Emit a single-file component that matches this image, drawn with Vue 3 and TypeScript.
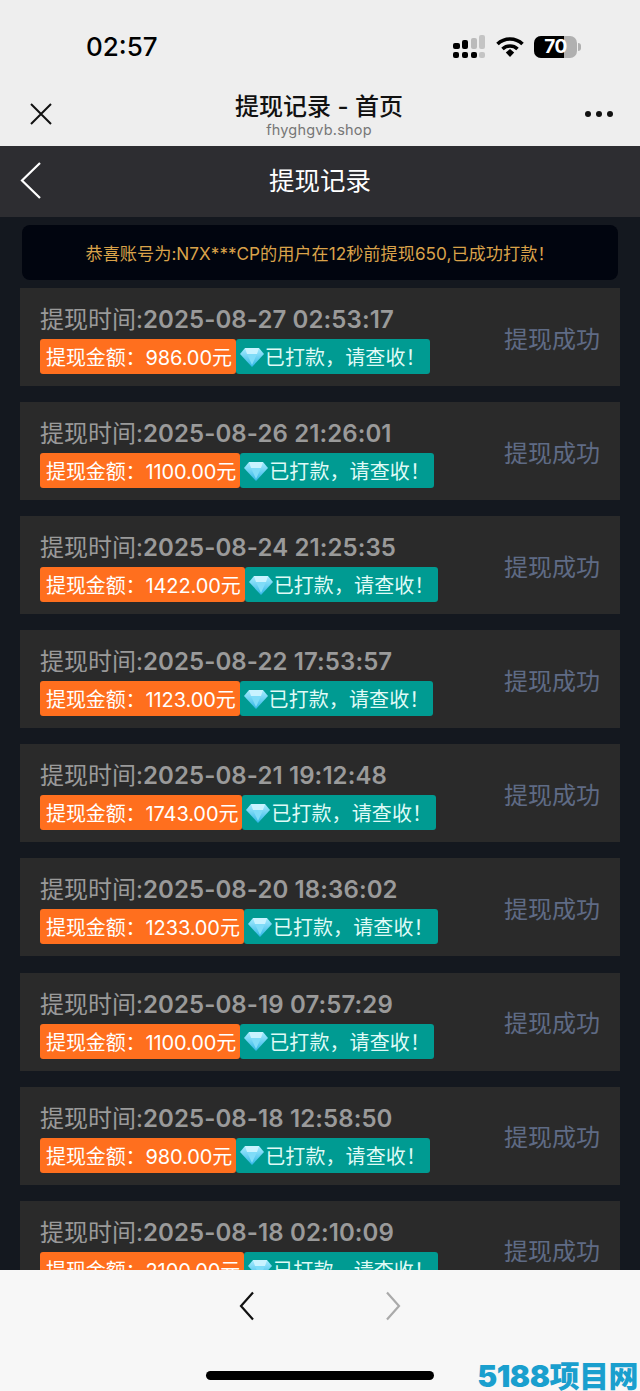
<script setup lang="ts">
const records = [
  { time: '2025-08-27 02:53:17', amount: '986.00' },
  { time: '2025-08-26 21:26:01', amount: '1100.00' },
  { time: '2025-08-24 21:25:35', amount: '1422.00' },
  { time: '2025-08-22 17:53:57', amount: '1123.00' },
  { time: '2025-08-21 19:12:48', amount: '1743.00' },
  { time: '2025-08-20 18:36:02', amount: '1233.00' },
  { time: '2025-08-19 07:57:29', amount: '1100.00' },
  { time: '2025-08-18 12:58:50', amount: '980.00' },
  { time: '2025-08-18 02:10:09', amount: '2100.00' }
]
</script>

<template>
  <div class="phone">
    <header class="browser-top">
      <div class="status">
        <span class="clock">02:57</span>
        <div class="status-icons">
          <svg class="signal" width="33" height="23" viewBox="0 0 33 23">
            <rect x="0" y="8" width="7" height="6" rx="2" fill="#000" />
            <rect x="9" y="5" width="6" height="9" rx="2" fill="#000" />
            <rect x="18" y="3" width="6" height="11" rx="2" fill="#bbb" />
            <rect x="26" y="0" width="6" height="14" rx="2" fill="#c4c4c4" />
            <rect x="0" y="17" width="6" height="6" rx="2" fill="#000" />
            <rect x="9" y="17" width="6" height="6" rx="2" fill="#000" />
            <rect x="18" y="17" width="6" height="6" rx="2" fill="#000" />
            <rect x="26" y="17" width="6" height="6" rx="2" fill="#c4c4c4" />
          </svg>
          <svg class="wifi" width="28" height="22" viewBox="0 0 28 22">
            <path d="M1.500 8a18 18 0 0 1 25 0" fill="none" stroke="#000" stroke-width="3.600" />
            <path d="M6.500 13a11 11 0 0 1 15 0" fill="none" stroke="#000" stroke-width="3.600" />
            <path d="M9.800 16.500L14 13l4.200 3.500L14 21z" fill="#000" />
          </svg>
          <div class="battery">
            <div class="battery-body">
              <span class="battery-fill"></span>
              <span class="battery-num">70</span>
            </div>
            <span class="battery-cap"></span>
          </div>
        </div>
      </div>
      <div class="title-row">
        <svg class="close" width="24" height="22" viewBox="0 0 24 22">
          <path d="M2 1l20 20M22 1L2 21" fill="none" stroke="#111" stroke-width="2" />
        </svg>
        <div class="title-block">
          <div class="page-title">提现记录 - 首页</div>
          <div class="page-url">fhyghgvb.shop</div>
        </div>
        <div class="more"><i></i><i></i><i></i></div>
      </div>
    </header>

    <nav class="navbar">
      <svg class="nav-back" width="22" height="37" viewBox="0 0 22 37">
        <path d="M20 1L2 18.500 20 36" fill="none" stroke="#fff" stroke-width="2.200" />
      </svg>
      <span class="nav-title">提现记录</span>
      <span class="nav-spacer"></span>
    </nav>

    <main class="content">
      <div class="notice">恭喜账号为:N7X***CP的用户在12秒前提现650,已成功打款！</div>
      <div v-for="item in records" :key="item.time" class="record">
        <div class="record-left">
          <div class="record-time">提现时间:<b>{{ item.time }}</b></div>
          <div class="tags">
            <span class="tag tag-amount">提现金额：{{ item.amount }}元</span>
            <span class="tag tag-paid">
              <svg width="26" height="24" viewBox="0 0 26 24">
                <defs>
                  <linearGradient id="gem" x1="0" y1="0" x2="0" y2="1">
                    <stop offset="0" stop-color="#a8ecff" />
                    <stop offset="1" stop-color="#2fb6e6" />
                  </linearGradient>
                </defs>
                <path d="M6 3h14l5 6-12 13L1 9z" fill="url(#gem)" />
                <path d="M8 9h10l-5 11z" fill="#7fdcf8" />
                <path d="M6 3l2 6h10l2-6z" fill="#c9f3ff" />
              </svg>已打款，请查收！
            </span>
          </div>
        </div>
        <span class="record-state">提现成功</span>
      </div>
    </main>

    <footer class="browser-bottom">
      <div class="arrows">
        <svg width="16" height="30" viewBox="0 0 16 30">
          <path d="M14 1.500L2 15l12 13.500" fill="none" stroke="#111" stroke-width="2.200" />
        </svg>
        <svg width="16" height="30" viewBox="0 0 16 30">
          <path d="M2 1.500L14 15 2 28.500" fill="none" stroke="#aaa" stroke-width="2.200" />
        </svg>
      </div>
      <div class="home-bar"></div>
      <div class="watermark">5188项目网</div>
    </footer>
  </div>
</template>

<style>
html,
body {
  margin: 0;
  background: #14181f;
}
</style>

<style scoped>
.phone {
  width: 640px;
  height: 1391px;
  display: flex;
  flex-direction: column;
  overflow: hidden;
  font-family: Inter, "Liberation Sans", "Noto Sans CJK SC", sans-serif;
  background: #14181f;
}

/* browser chrome */
.browser-top {
  height: 146px;
  flex: none;
  background: #eeeeee;
}

.status {
  height: 83px;
  box-sizing: border-box;
  padding: 32px 59px 0 86px;
  display: flex;
  justify-content: space-between;
  align-items: flex-start;
}

.clock {
  font-size: 26px;
  line-height: 30px;
  font-weight: 500;
  color: #000;
}

.status-icons {
  display: flex;
  align-items: center;
  gap: 10px;
  padding-top: 3px;
}

.battery {
  display: flex;
  align-items: center;
  gap: 1px;
}

.battery-body {
  width: 43px;
  height: 22px;
  border-radius: 7px;
  overflow: hidden;
  background: #b0b0b0;
  display: flex;
  position: relative;
  align-items: center;
  justify-content: center;
}

.battery-fill {
  position: absolute;
  left: 0;
  top: 0;
  bottom: 0;
  width: 30px;
  background: #000;
}

.battery-num {
  position: relative;
  color: #fff;
  font-size: 19px;
  font-weight: 700;
  letter-spacing: -0.5px;
}

.battery-cap {
  width: 3px;
  height: 8px;
  border-radius: 0 3px 3px 0;
  background: #b0b0b0;
}

.title-row {
  height: 63px;
  display: flex;
  align-items: center;
  justify-content: space-between;
  padding: 0 27px 0 29px;
}

.close,
.more {
  margin-top: -2px;
}

.title-block {
  text-align: center;
}

.page-title {
  font-size: 24px;
  line-height: 30px;
  font-weight: 500;
  color: #111;
}

.page-url {
  font-size: 14.500px;
  line-height: 16px;
  color: #777;
  letter-spacing: 0.2px;
}

.more {
  display: flex;
  gap: 5px;
}

.more i {
  width: 6px;
  height: 6px;
  border-radius: 50%;
  background: #111;
}

/* page nav */
.navbar {
  height: 71px;
  flex: none;
  background: #2d2d31;
  display: flex;
  align-items: center;
  justify-content: space-between;
  padding: 0 20px;
}

.nav-back {
  margin-top: -2px;
}

.nav-title {
  font-size: 25.500px;
  color: #fff;
  margin-top: -7px;
}

.nav-spacer {
  width: 22px;
}

.content {
  flex: 1;
  min-height: 0;
  overflow: hidden;
  padding: 8px 20px 0;
  display: flex;
  flex-direction: column;
  gap: 16.080px;
}

.notice {
  flex: none;
  height: 55px;
  margin: 0 2px -8px;
  border-radius: 8px;
  background: #01050f;
  color: #d9a24a;
  font-size: 17.200px;
  display: flex;
  align-items: center;
  justify-content: center;
}

.record {
  flex: none;
  height: 98px;
  box-sizing: border-box;
  padding: 16px 20px 12px;
  background: #2a2a2a;
  display: flex;
  align-items: center;
  justify-content: space-between;
}

.record-time {
  font-size: 24px;
  line-height: 30px;
  color: #9a9a9a;
  margin-bottom: 5px;
  position: relative;
  top: 1px;
}

.record-time b {
  font-weight: 600;
  letter-spacing: 0.1px;
}

.tags {
  display: flex;
}

.tag {
  height: 35px;
  box-sizing: border-box;
  display: inline-flex;
  align-items: center;
  border-radius: 3px;
  font-size: 20px;
  color: #fff;
  white-space: nowrap;
}

.tag-amount {
  background: #ff6f1e;
  padding: 0 4px 0 6px;
  letter-spacing: -0.1px;
}

.tag-paid {
  background: #009b92;
  padding: 0 4px 0 3px;
  letter-spacing: 0.1px;
  color: #dffaf6;
}

.record-state {
  font-size: 24px;
  color: #5f6b85;
  margin-top: -4px;
}

.browser-bottom {
  height: 121px;
  flex: none;
  position: relative;
  background: #f7f7f7;
}

.arrows {
  display: flex;
  justify-content: center;
  gap: 130px;
  padding-top: 21px;
}

.home-bar {
  width: 228px;
  height: 9px;
  border-radius: 5px;
  background: #000;
  margin: 50px auto 0;
}

.watermark {
  position: absolute;
  right: 2px;
  bottom: 0;
  font-size: 30px;
  line-height: 30px;
  font-weight: 900;
  color: #1a9fce;
  letter-spacing: -0.5px;
}
</style>
